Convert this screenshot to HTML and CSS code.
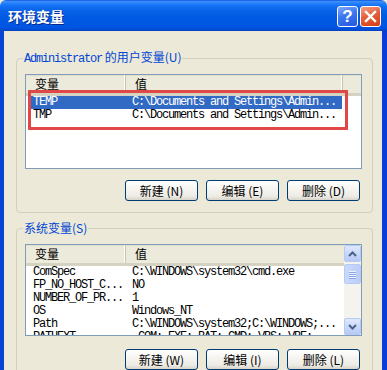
FILE: index.html
```html
<!DOCTYPE html>
<html lang="zh-CN">
<head>
  <meta charset="UTF-8">
  <title>环境变量</title>
  <link rel="stylesheet" href="styles.css">
</head>
<body>
  <div class="window">
    <div class="titlebar">
      <span class="title">环境变量</span>
      <div class="caption-btns">
        <span class="cbtn help">?</span>
        <span class="cbtn close">
          <svg width="13" height="13" viewBox="0 0 13 13"><path d="M2 2 L11 11 M11 2 L2 11" stroke="#fff" stroke-width="2.4" stroke-linecap="square"/></svg>
        </span>
      </div>
    </div>

    <div class="client">
      <fieldset class="group user">
        <legend><span class="mono">Administrator</span> 的用户变量(U)</legend>
        <div class="listview lv-user">
          <div class="lv-main">
            <div class="lv-head">
              <span class="hcell c1">变量</span>
              <span class="hcell c2">值</span>
            </div>
            <div class="lv-body">
              <div class="row sel"><span class="c1">TEMP</span><span class="c2">C:\Documents and Settings\Admin...</span></div>
              <div class="row"><span class="c1">TMP</span><span class="c2">C:\Documents and Settings\Admin...</span></div>
            </div>
          </div>
          <div class="mark"></div>
        </div>
        <div class="btns">
          <button class="xp-btn">新建 (N)</button>
          <button class="xp-btn">编辑 (E)</button>
          <button class="xp-btn">删除 (D)</button>
        </div>
      </fieldset>

      <fieldset class="group sys">
        <legend>系统变量(S)</legend>
        <div class="listview lv-sys">
          <div class="lv-main">
            <div class="lv-head">
              <span class="hcell c1">变量</span>
              <span class="hcell c2 fill">值</span>
            </div>
            <div class="lv-body">
              <div class="row"><span class="c1">ComSpec</span><span class="c2">C:\WINDOWS\system32\cmd.exe</span></div>
              <div class="row"><span class="c1">FP_NO_HOST_C...</span><span class="c2">NO</span></div>
              <div class="row"><span class="c1">NUMBER_OF_PR...</span><span class="c2">1</span></div>
              <div class="row"><span class="c1">OS</span><span class="c2">Windows_NT</span></div>
              <div class="row"><span class="c1">Path</span><span class="c2">C:\WINDOWS\system32;C:\WINDOWS;...</span></div>
              <div class="row"><span class="c1">PATHEXT</span><span class="c2">.COM;.EXE;.BAT;.CMD;.VBS;.VBE;...</span></div>
            </div>
          </div>
          <div class="scrollbar">
            <div class="sb-btn">
              <svg width="9" height="6" viewBox="0 0 9 6"><path d="M1 5 L4.5 1.5 L8 5" fill="none" stroke="#4d6185" stroke-width="2"/></svg>
            </div>
            <div class="sb-track">
              <div class="sb-thumb"><span></span><span></span><span></span><span></span></div>
            </div>
            <div class="sb-btn">
              <svg width="9" height="6" viewBox="0 0 9 6"><path d="M1 1 L4.5 4.5 L8 1" fill="none" stroke="#4d6185" stroke-width="2"/></svg>
            </div>
          </div>
        </div>
        <div class="btns">
          <button class="xp-btn">新建 (W)</button>
          <button class="xp-btn">编辑 (I)</button>
          <button class="xp-btn">删除 (L)</button>
        </div>
      </fieldset>
    </div>
  </div>
</body>
</html>
```

FILE: styles.css
```css
* {
  box-sizing: border-box;
}

html, body {
  margin: 0;
  padding: 0;
  width: 387px;
  height: 370px;
  overflow: hidden;
}

body {
  background: #ece9d8;
  font-family: "Noto Sans CJK SC", sans-serif;
  font-size: 12px;
  color: #000;
}

.window {
  width: 387px;
  height: 370px;
  overflow: hidden;
}

/* title bar */
.titlebar {
  height: 31px;
  display: flex;
  align-items: flex-start;
  justify-content: space-between;
  padding: 0 6px 0 8px;
  border-radius: 6px 6px 0 0;
  background: linear-gradient(180deg, #0a56e0 0%, #3d8ffb 5%, #2a82fb 10%, #1472f5 18%, #0862e8 35%, #0059e2 60%, #0056e4 85%, #0050dc 94%, #0040b8 100%);
}

.title {
  margin-top: 6px;
  font-size: 14px;
  line-height: 20px;
  font-weight: bold;
  color: #fff;
  text-shadow: 1px 1px 0 #0a2a8a;
}

.caption-btns {
  display: flex;
  gap: 2px;
  margin-top: 6px;
}

.cbtn {
  width: 21px;
  height: 21px;
  border: 1px solid #fff;
  border-radius: 3px;
  display: flex;
  align-items: center;
  justify-content: center;
  color: #fff;
}

.help {
  background: linear-gradient(160deg, #7fa9fb 0%, #3b76ef 45%, #2458e0 100%);
  font-family: "Liberation Sans", sans-serif;
  font-size: 17px;
  font-weight: bold;
  line-height: 1;
}

.close {
  background: linear-gradient(160deg, #f3a186 0%, #e4603c 45%, #cf3e16 100%);
}

/* client area */
.client {
  height: 339px;
  border-left: 4px solid #0843d4;
  border-right: 5px solid #0a3cd8;
  padding: 20px 9px 0 12px;
}

.group {
  margin: 0;
  border: 1px solid #d0d0bf;
  border-radius: 4px;
  padding: 9px 10px 11px 8px;
}

.group.sys {
  margin-top: 9px;
  padding-top: 10px;
}

.group legend {
  padding: 0 1px;
  margin-left: -2px;
  line-height: 12px;
  color: #0046d5;
}

.mono,
.row {
  font-family: "Liberation Mono", monospace;
  font-size: 12px;
  letter-spacing: -1.2px;
}

/* list views */
.listview {
  position: relative;
  display: flex;
  border: 1px solid #7f9db9;
  background: #fff;
  overflow: hidden;
}

.lv-user {
  height: 95px;
}

.lv-sys {
  height: 92px;
}

.lv-main {
  flex: 1;
  overflow: hidden;
}

.lv-head {
  display: flex;
  height: 21px;
  background: #ebeadb;
  border-bottom: 3px solid #d6d2c2;
  box-shadow: 0 1px 0 #e2decd inset;
}

.hcell {
  height: 18px;
  line-height: 18px;
  padding-left: 9px;
  border-right: 1px solid #c7c5b2;
  box-shadow: -1px 0 0 #fff inset;
}

.hcell.c1 {
  width: 100px;
}

.hcell.c2 {
  width: 217px;
}

.hcell.fill {
  flex: 1;
  border-right: none;
  box-shadow: none;
}

.row {
  display: flex;
  height: 13px;
  line-height: 13px;
  margin-left: 5px;
  width: 311px;
  white-space: nowrap;
}

.row .c1 {
  width: 94px;
  padding-left: 2px;
  overflow: hidden;
}

.row .c2 {
  padding-left: 7px;
}

.row.sel {
  background: #316ac5;
  color: #fff;
}

/* red annotation frame */
.mark {
  position: absolute;
  left: 2px;
  top: 15px;
  width: 320px;
  height: 40px;
  border: 3px solid #e04848;
}

/* scrollbar */
.scrollbar {
  width: 17px;
  display: flex;
  flex-direction: column;
  background: #f4f3ee;
}

.sb-btn {
  height: 17px;
  border: 1px solid #b7caf5;
  border-radius: 2px;
  background: linear-gradient(180deg, #dfe8fd 0%, #c6d5fa 60%, #b6c8f4 100%);
  display: flex;
  align-items: center;
  justify-content: center;
}

.sb-track {
  flex: 1;
  padding-top: 2px;
}

.sb-thumb {
  height: 20px;
  border: 1px solid #b7caf5;
  border-radius: 2px;
  background: linear-gradient(90deg, #c9d8fc 0%, #bccdf8 100%);
  display: flex;
  flex-direction: column;
  align-items: center;
  justify-content: center;
  gap: 1px;
}

.sb-thumb span {
  width: 7px;
  height: 1px;
  background: #eef3ff;
  box-shadow: 0 1px 0 #8ca6e6;
}

/* buttons */
.btns {
  display: flex;
  justify-content: flex-end;
  gap: 8px;
  padding-right: 2px;
  margin-top: 11px;
}

.sys .btns {
  margin-top: 13px;
}

.xp-btn {
  width: 73px;
  height: 21px;
  padding: 0;
  border: 1px solid #003c74;
  border-radius: 3px;
  background: linear-gradient(180deg, #ffffff 0%, #f6f5f1 40%, #ecebe5 80%, #d8d4c8 100%);
  font-family: "Noto Sans CJK SC", sans-serif;
  font-size: 12px;
  line-height: 19px;
  color: #000;
}
```
